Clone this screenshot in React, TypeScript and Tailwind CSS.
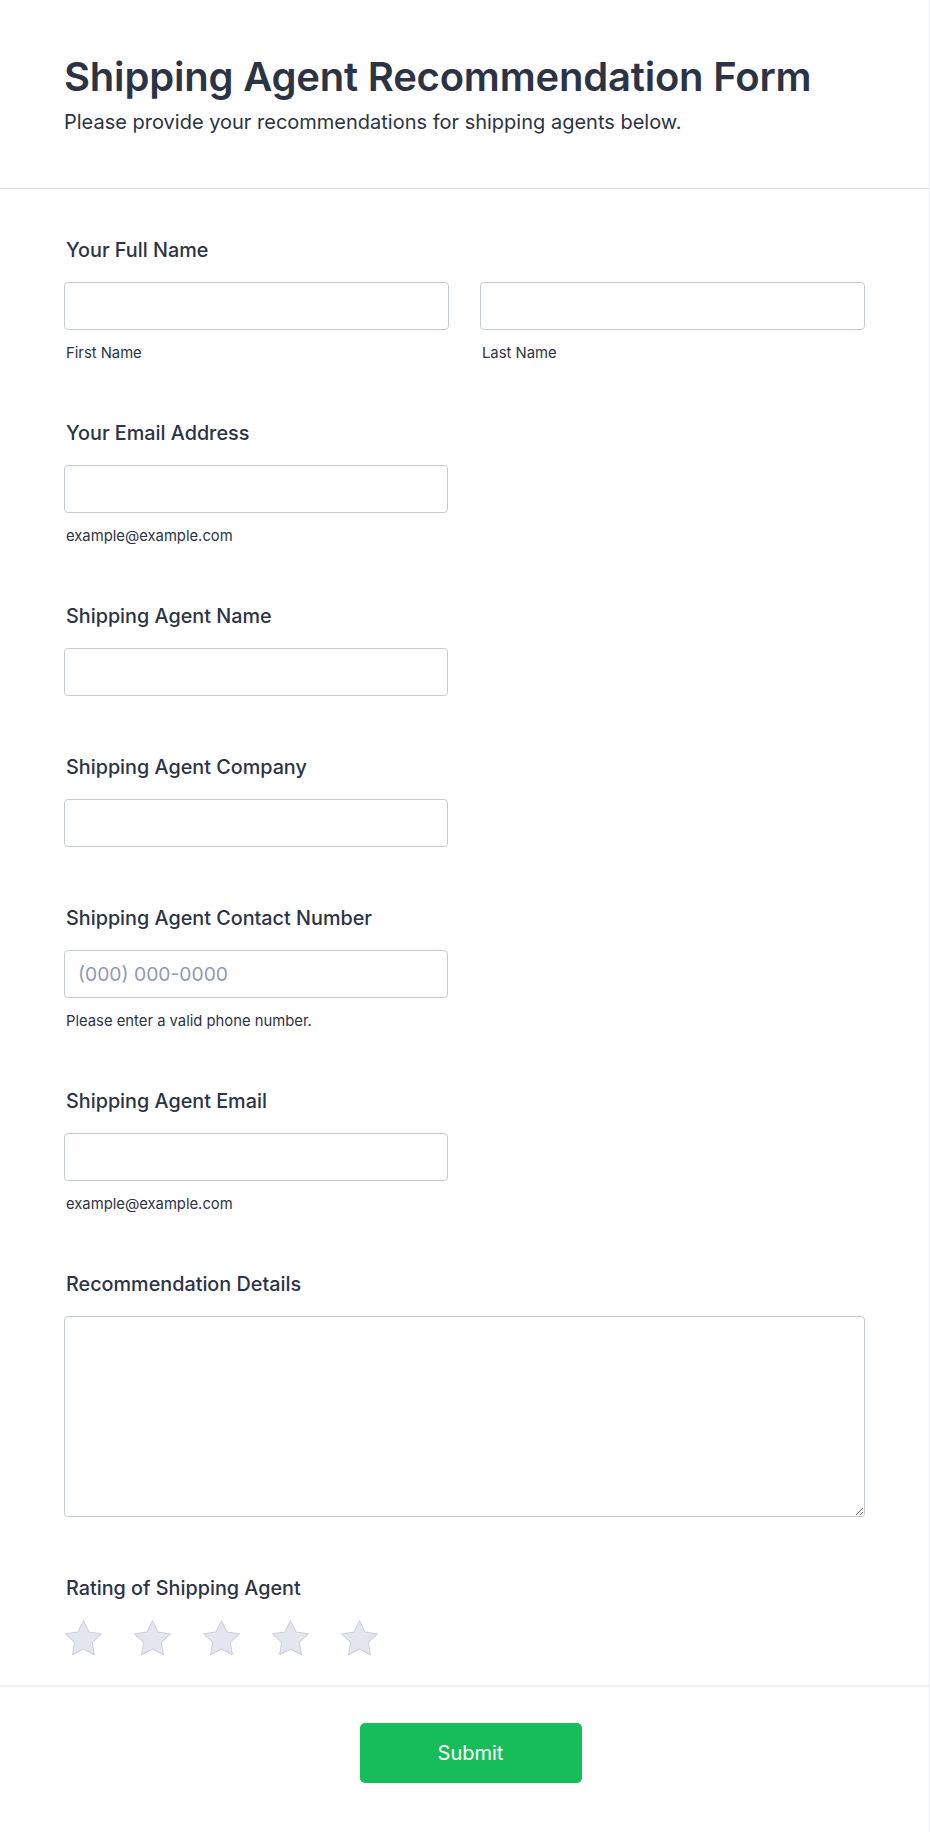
import React from 'react';

const font = { fontFamily: 'Inter, "Noto Sans", sans-serif' };

function Star() {
  return (
    <svg width="37" height="35" viewBox="2.2 2 19.6 18.8" className="shrink-0">
      <path
        d="M12 2.4l2.95 6.05 6.6.95-4.78 4.68 1.13 6.62L12 17.55l-5.9 3.15 1.13-6.62L2.45 9.4l6.6-.95L12 2.4z"
        fill="#e3e6ef"
        stroke="#cdd1dc"
        strokeWidth="0.55"
        strokeLinejoin="round"
      />
    </svg>
  );
}

function Label({ children }: { children: React.ReactNode }) {
  return (
    <label className="block pl-[2px] text-[19.8px] leading-[27px] font-medium text-[#2c3345] mb-[18px]">
      {children}
    </label>
  );
}

function Sub({ children }: { children: React.ReactNode }) {
  return <div className="mt-[15px] pl-[2px] text-[14.8px] leading-[17px] text-[#2c3345]">{children}</div>;
}

function Input({ placeholder }: { placeholder?: string }) {
  return (
    <input
      type="text"
      placeholder={placeholder}
      className="block w-full h-12 px-[13px] border border-[#c3cad8] rounded-[4px] bg-white text-[19.3px] text-[#2c3345] placeholder:text-[#8f9bb3] outline-none"
      style={font}
    />
  );
}

export default function App(): React.JSX.Element {
  return (
    <div className="w-full bg-white border-r border-b border-[#eceef3]" style={font}>
      <div className="px-16 pt-[53px] pb-[51px] border-b border-[#d8dae5]">
        <h1 className="text-[40px] leading-[48px] font-semibold text-[#2c3345] tracking-[-0.2px]">
          Shipping Agent Recommendation Form
        </h1>
        <p className="mt-[6px] text-[20px] leading-[30px] text-[#2c3345]">
          Please provide your recommendations for shipping agents below.
        </p>
      </div>

      <div className="px-16 pt-12 pb-[30px] flex flex-col gap-[58px]">
        <div>
          <Label>Your Full Name</Label>
          <div className="grid grid-cols-2 gap-[31px]">
            <div>
              <Input />
              <Sub>First Name</Sub>
            </div>
            <div>
              <Input />
              <Sub>Last Name</Sub>
            </div>
          </div>
        </div>

        <div>
          <Label>Your Email Address</Label>
          <div className="w-[384px]">
            <Input />
            <Sub>example@example.com</Sub>
          </div>
        </div>

        <div>
          <Label>Shipping Agent Name</Label>
          <div className="w-[384px]">
            <Input />
          </div>
        </div>

        <div>
          <Label>Shipping Agent Company</Label>
          <div className="w-[384px]">
            <Input />
          </div>
        </div>

        <div>
          <Label>Shipping Agent Contact Number</Label>
          <div className="w-[384px]">
            <Input placeholder="(000) 000-0000" />
            <Sub>Please enter a valid phone number.</Sub>
          </div>
        </div>

        <div>
          <Label>Shipping Agent Email</Label>
          <div className="w-[384px]">
            <Input />
            <Sub>example@example.com</Sub>
          </div>
        </div>

        <div>
          <Label>Recommendation Details</Label>
          <textarea className="block w-full h-[201px] border border-[#c3cad8] rounded-[4px] bg-white outline-none" />
        </div>

        <div>
          <Label>Rating of Shipping Agent</Label>
          <div className="flex items-center gap-[32px] h-[35px] pl-[1px]">
            <Star />
            <Star />
            <Star />
            <Star />
            <Star />
          </div>
        </div>
      </div>

      <div className="border-t-2 border-[#eceef3] pt-9 pb-[49px] pl-[12px] flex justify-center">
        <button className="w-[222px] h-[60px] rounded-[5px] bg-[#18bd5b] text-white text-[20px] font-normal">
          Submit
        </button>
      </div>
    </div>
  );
}
